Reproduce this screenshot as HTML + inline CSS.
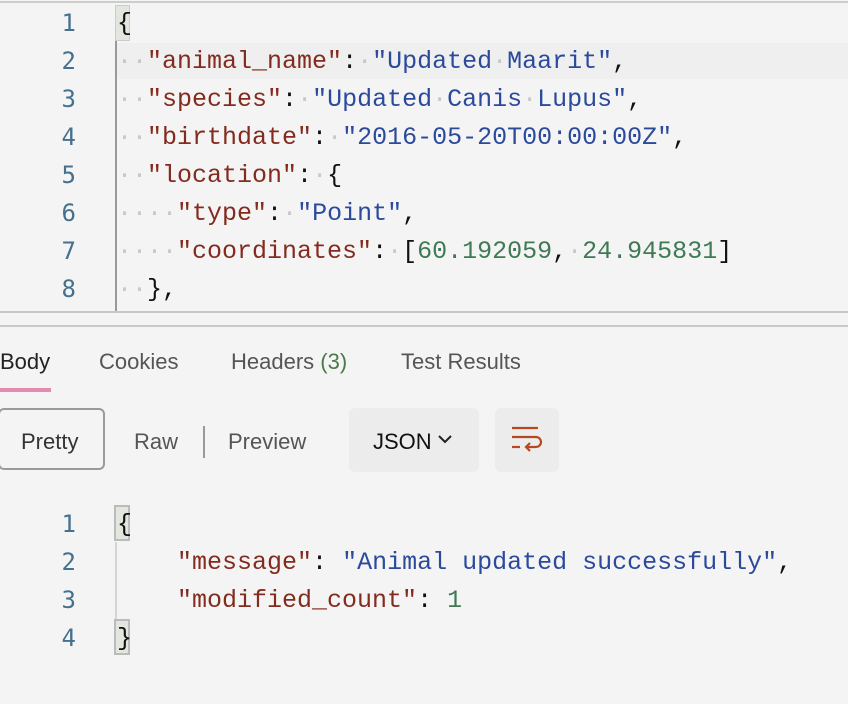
<!DOCTYPE html>
<html><head><meta charset="utf-8"><style>
body{margin:0;width:848px;height:704px;background:#f4f4f4;overflow:hidden;position:relative;font-family:"Liberation Mono",monospace;}
.ln{position:absolute;left:36px;width:40px;text-align:right;font-family:"DejaVu Sans Mono",monospace;font-size:24px;color:#45708e;line-height:38px;}
.cd{position:absolute;left:117px;font-size:25px;line-height:38px;white-space:pre;color:#111;}
.k{color:#832b1e}.s{color:#2b4a9c}.n{color:#3f7a55}.d{color:#c8c8c8}
.ui{position:absolute;font-family:"Liberation Sans",sans-serif;font-size:22px;color:#555;}
</style></head><body>
<div style="position:absolute;left:0;top:1px;width:848px;height:2px;background:#cdcdcd"></div>
<div style="position:absolute;left:115px;top:40px;width:2px;height:272px;background:#999"></div>
<div style="position:absolute;left:117px;top:43px;width:731px;height:36px;background:#efefef"></div>
<div style="position:absolute;left:115px;top:5px;width:15px;height:36px;background:#e3e6df;border:1px solid #ccc;box-sizing:border-box"></div>
<div style="position:absolute;left:0;top:311px;width:848px;height:2px;background:#c8c8c8"></div>
<div style="position:absolute;left:0;top:325px;width:848px;height:2px;background:#c8c8c8"></div>

<div class="ln" style="top:4px">1<br>2<br>3<br>4<br>5<br>6<br>7<br>8</div>
<div class="cd" style="top:5px">{
<span class="d">··</span><span class="k">"animal_name"</span>:<span class="d">·</span><span class="s">"Updated<span class="d">·</span>Maarit"</span>,
<span class="d">··</span><span class="k">"species"</span>:<span class="d">·</span><span class="s">"Updated<span class="d">·</span>Canis<span class="d">·</span>Lupus"</span>,
<span class="d">··</span><span class="k">"birthdate"</span>:<span class="d">·</span><span class="s">"2016-05-20T00:00:00Z"</span>,
<span class="d">··</span><span class="k">"location"</span>:<span class="d">·</span>{
<span class="d">····</span><span class="k">"type"</span>:<span class="d">·</span><span class="s">"Point"</span>,
<span class="d">····</span><span class="k">"coordinates"</span>:<span class="d">·</span>[<span class="n">60.192059</span>,<span class="d">·</span><span class="n">24.945831</span>]
<span class="d">··</span>},</div>

<div class="ui" style="left:0;top:349px;color:#222">Body</div>
<div style="position:absolute;left:0;top:388px;width:51px;height:4px;background:#e68bb0"></div>
<div class="ui" style="left:99px;top:349px">Cookies</div>
<div class="ui" style="left:231px;top:349px">Headers <span style="color:#4b7a46">(3)</span></div>
<div class="ui" style="left:401px;top:349px">Test Results</div>

<div style="position:absolute;left:-2px;top:408px;width:107px;height:62px;border:2px solid #9a9a9a;border-radius:6px;box-sizing:border-box"></div>
<div class="ui" style="left:21px;top:429px;color:#333">Pretty</div>
<div class="ui" style="left:134px;top:429px">Raw</div>
<div style="position:absolute;left:203px;top:426px;width:2px;height:32px;background:#999"></div>
<div class="ui" style="left:228px;top:429px">Preview</div>
<div style="position:absolute;left:349px;top:408px;width:130px;height:64px;background:#ececec;border-radius:6px"></div>
<div class="ui" style="left:373px;top:429px;color:#111">JSON</div>
<svg style="position:absolute;left:436px;top:432px" width="20" height="14"><path d="M3 4 L9 10 L15 4" stroke="#222" stroke-width="2" fill="none"/></svg>
<div style="position:absolute;left:495px;top:408px;width:64px;height:64px;background:#ececec;border-radius:6px"></div>
<svg style="position:absolute;left:510px;top:424px" width="36" height="36"><g stroke="#b8481f" stroke-width="2.2" fill="none"><path d="M2 4 H28"/><path d="M2 13 H26 a5 5 0 0 1 0 10 H16"/><path d="M20 19 L16 23 L20 27"/><path d="M2 23 H10"/></g></svg>

<div style="position:absolute;left:115px;top:542px;width:2px;height:80px;background:#d4d4d4"></div>
<div style="position:absolute;left:114px;top:505px;width:16px;height:36px;background:#e3e6df;border:2px solid #bbb;box-sizing:border-box"></div>
<div style="position:absolute;left:114px;top:619px;width:16px;height:36px;background:#e3e6df;border:2px solid #bbb;box-sizing:border-box"></div>
<div class="ln" style="top:505px">1<br>2<br>3<br>4</div>
<div class="cd" style="top:506px">{
    <span class="k">"message"</span>: <span class="s">"Animal updated successfully"</span>,
    <span class="k">"modified_count"</span>: <span class="n">1</span>
}</div>
</body></html>
